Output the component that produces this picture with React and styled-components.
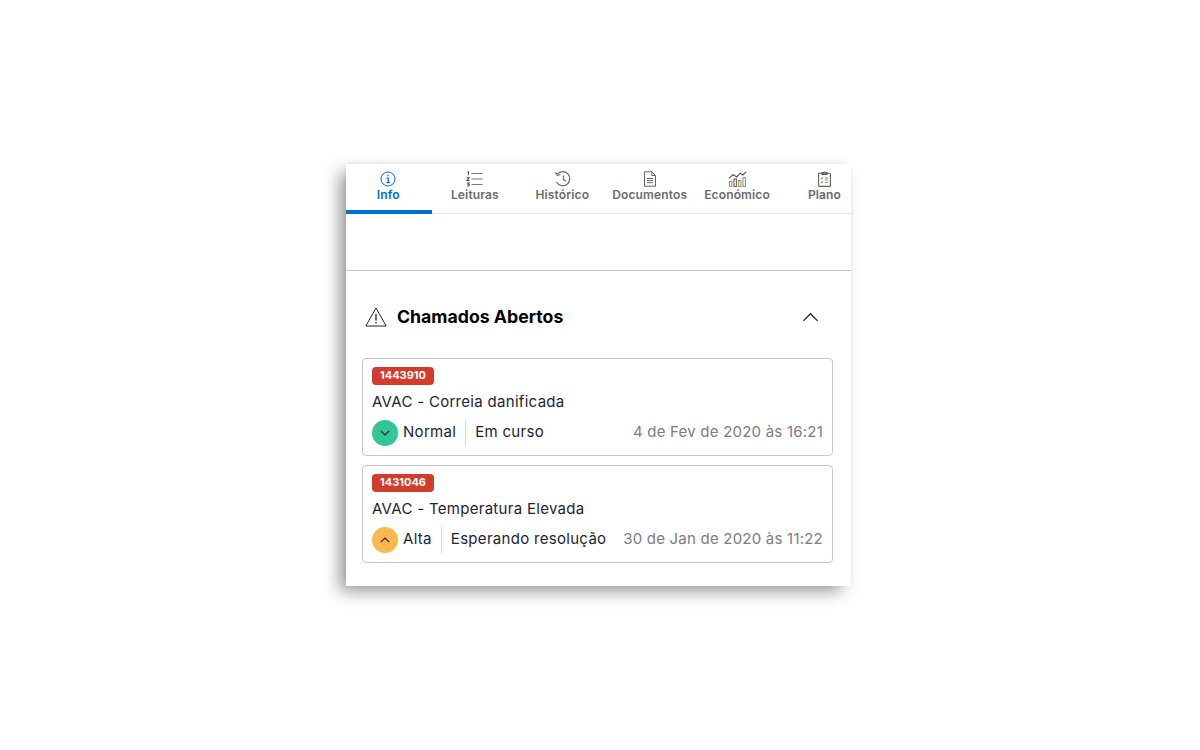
import React from 'react';
import styled, { createGlobalStyle } from 'styled-components';

const Global = createGlobalStyle`
  html, body {
    margin: 0;
    background: #fff;
    font-family: 'Inter', 'Liberation Sans', sans-serif;
    color: #1c2433;
  }
`;

const InfoIcon = () => (
  <svg width="16" height="16" viewBox="0 0 16 16" fill="none" stroke="currentColor" strokeWidth="1">
    <circle cx="8" cy="8" r="7" />
    <path d="M8 3.8v1.5M6.6 7.2H8.2V11.4M6.6 11.6h3.2" strokeWidth="1.2" />
  </svg>
);

const ListIcon = () => (
  <svg width="17" height="16" viewBox="0 0 17 16" fill="none" stroke="#777" strokeWidth="1.1">
    <path d="M5.5 2.5h11M5.5 8h11M5.5 13.5h11" />
    <path d="M1.5 1.5l1-.6v3.4M.8 6.6h2.4L1 9.4h2.4M1 12h2.2l-1 1.2c1 0 1.2 .4 1.2 1s-.6 1-2.4 .8" stroke="#555" />
  </svg>
);

const HistoryIcon = () => (
  <svg width="17" height="16" viewBox="0 0 17 16" fill="none" stroke="#666" strokeWidth="1.2">
    <path d="M3.4 3.2A7 7 0 1 1 2.6 11" />
    <path d="M1.6 1.2l1.6 3.2 3.2-.9" />
    <path d="M9.5 4.4v4l2.6 1.8" />
  </svg>
);

const DocIcon = () => (
  <svg width="14" height="16" viewBox="0 0 14 16" fill="none" stroke="#666" strokeWidth="1">
    <path d="M1.5 .8h7.4l3.6 3.6v10.8h-11z" />
    <path d="M8.8 .8v3.7h3.7M4 7.5h6M4 9.6h6M4 11.7h6" />
  </svg>
);

const ChartIcon = () => (
  <svg width="19" height="16" viewBox="0 0 19 16" fill="none" strokeWidth="1.1">
    <path d="M1 7.2l4.2-3.6 3.4 2.4 3.6-3.8 2.6 1.8L18 .8" stroke="#4f4f4f" />
    <rect x="1.5" y="10.5" width="2.4" height="5" stroke="#c18a55" />
    <rect x="6" y="8" width="2.4" height="7.5" stroke="#666" />
    <rect x="10.5" y="9.5" width="2.4" height="6" stroke="#c18a55" />
    <rect x="15" y="6.5" width="2.4" height="9" stroke="#6f9fc4" />
  </svg>
);

const PlanIcon = () => (
  <svg width="13" height="16" viewBox="0 0 13 16" fill="none" stroke="#5f5f5f" strokeWidth="1.1">
    <rect x=".6" y="2.2" width="11.8" height="13.2" rx=".8" />
    <path d="M4 3.4V1.6h1.6a1 1 0 0 1 1.8 0H9v1.8z" />
    <path d="M3 7l.8.8L5 6.4M7 7h3M3 11l.8.8L5 10.4M7 9h3M7 11.5h3" stroke="#b5885f" />
  </svg>
);

const AlertIcon = () => (
  <svg width="22" height="20" viewBox="0 0 22 20" fill="none" stroke="#1c2433" strokeWidth="1">
    <path d="M11 1 21.2 19H.8z" strokeLinejoin="round" />
    <path d="M11 7v6.5M11 15v1.6" strokeWidth="1.3" />
  </svg>
);

const Chevron = ({ down, size = 10, weight = 1.2 }) => (
  <svg width={size} height={size * 0.6} viewBox="0 0 10 6" fill="none" stroke="#1c2433" strokeWidth={weight}>
    <path d={down ? 'M.8 .8 5 5 9.2 .8' : 'M.8 5.2 5 1 9.2 5.2'} />
  </svg>
);

const tabs = [
  { label: 'Info', icon: <InfoIcon />, active: true },
  { label: 'Leituras', icon: <ListIcon /> },
  { label: 'Histórico', icon: <HistoryIcon /> },
  { label: 'Documentos', icon: <DocIcon /> },
  { label: 'Económico', icon: <ChartIcon /> },
  { label: 'Plano', icon: <PlanIcon /> },
];

const tickets = [
  {
    id: '1443910',
    title: 'AVAC - Correia danificada',
    level: 'Normal',
    color: '#33c696',
    down: true,
    status: 'Em curso',
    date: '4 de Fev de 2020 às 16:21',
  },
  {
    id: '1431046',
    title: 'AVAC - Temperatura Elevada',
    level: 'Alta',
    color: '#ffb74f',
    status: 'Esperando resolução',
    date: '30 de Jan de 2020 às 11:22',
  },
];

const App = () => (
  <Page>
    <Global />
    <Panel>
      <TabBar>
        {tabs.map((tab) => (
          <Tab key={tab.label} $active={tab.active}>
            <TabIcon>{tab.icon}</TabIcon>
            {tab.label}
          </Tab>
        ))}
      </TabBar>
      <EmptyBand />
      <Section>
        <SectionHead>
          <AlertIcon />
          <SectionTitle>Chamados Abertos</SectionTitle>
          <Toggle>
            <Chevron size={17} weight={0.75} />
          </Toggle>
        </SectionHead>
        <CardList>
          {tickets.map((t) => (
            <Card key={t.id}>
              <Badge>{t.id}</Badge>
              <CardTitle>{t.title}</CardTitle>
              <CardRow>
                <Level $color={t.color}>
                  <Chevron down={t.down} />
                </Level>
                <LevelName>{t.level}</LevelName>
                <Status>{t.status}</Status>
                <DateText>{t.date}</DateText>
              </CardRow>
            </Card>
          ))}
        </CardList>
      </Section>
    </Panel>
  </Page>
);

export default App;

const Page = styled.div`
  box-sizing: border-box;
  min-height: 750px;
  padding: 164px 0 0 346px;
`;

const Panel = styled.div`
  width: 505px;
  height: 422px;
  background: #fff;
  box-shadow: -8px 7px 16px -2px rgba(0, 0, 0, 0.42), 0 -1px 6px rgba(0, 0, 0, 0.05);
`;

const TabBar = styled.div`
  display: flex;
  width: 508px;
  height: 50px;
  overflow: hidden;
  box-shadow: inset 0 -1px 0 #e4e4e4;
`;

const Tab = styled.div`
  flex: 0 0 ${(p) => (p.$active ? '86px' : '87.4px')};
  height: 50px;
  box-sizing: border-box;
  padding: 7px 1.6px 0 0;
  display: flex;
  flex-direction: column;
  align-items: center;
  font-size: 12px;
  font-weight: 600;
  letter-spacing: 0.15px;
  line-height: 14px;
  color: ${(p) => (p.$active ? '#0070c9' : '#6b6b6b')};
  border-bottom: 4px solid ${(p) => (p.$active ? '#0070c9' : 'transparent')};
`;

const TabIcon = styled.div`
  height: 16px;
  margin-bottom: 1px;
  svg {
    display: block;
  }
`;

const EmptyBand = styled.div`
  height: 56px;
  border-bottom: 1px solid #c8c8c8;
`;

const Section = styled.div`
  padding: 0 18px 0 16px;
`;

const SectionHead = styled.div`
  height: 87px;
  box-sizing: border-box;
  padding: 4px 0 0 3px;
  display: flex;
  align-items: center;
`;

const SectionTitle = styled.h2`
  margin: 0 0 0 10px;
  font-size: 17.7px;
  font-weight: 700;
  color: #000;
`;

const Toggle = styled.div`
  margin: 2px 14px 0 auto;
  display: flex;
`;

const CardList = styled.div`
  display: flex;
  flex-direction: column;
  gap: 9px;
`;

const Card = styled.div`
  height: 98px;
  box-sizing: border-box;
  border: 1px solid #c8c8c8;
  border-radius: 4px;
  padding: 8px 9px;
`;

const Badge = styled.div`
  width: 62px;
  height: 18px;
  background: #d13c2d;
  border-radius: 4px;
  color: #fff;
  font-size: 11px;
  font-weight: 700;
  line-height: 17px;
  text-align: center;
`;

const CardTitle = styled.div`
  margin-top: 7px;
  height: 20px;
  font-size: 15px;
  letter-spacing: 0.3px;
  line-height: 20px;
`;

const CardRow = styled.div`
  margin-top: 8px;
  display: flex;
  align-items: center;
  font-size: 15px;
  letter-spacing: 0.3px;
  line-height: 24px;
`;

const Level = styled.div`
  width: 26px;
  height: 26px;
  border-radius: 50%;
  background: ${(p) => p.$color};
  display: flex;
  align-items: center;
  justify-content: center;
`;

const LevelName = styled.span`
  margin-left: 5px;
  padding: 0 9px 2px 0;
  border-right: 1px solid #dcdcdc;
`;

const Status = styled.span`
  margin-left: 9px;
  padding-bottom: 2px;
`;

const DateText = styled.span`
  margin-left: auto;
  padding-bottom: 2px;
  letter-spacing: 0.22px;
  color: #7d7d7d;
`;
